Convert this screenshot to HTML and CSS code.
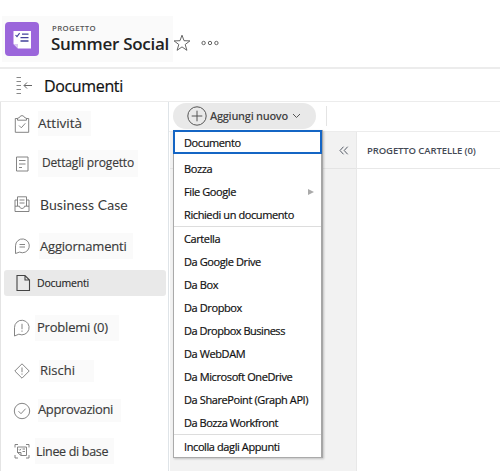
FILE: index.html
```html
<!DOCTYPE html>
<html lang="it">
<head>
<meta charset="utf-8">
<title>Summer Social - Documenti</title>
<link rel="stylesheet" href="styles.css">
</head>
<body>
<header class="project">
  <div class="project-card">
    <div class="project-icon">
      <svg width="34" height="34" viewBox="0 0 34 34"><path d="M8.500 9h17.500v17.500H13l-4.500-4.500z" fill="#fff"/><path d="M8.500 22h4.500v4.500z" fill="#d9c6f0"/><path d="M10.500 13l1.500 1.700 2.600-3.500" fill="none" stroke="#43419b" stroke-width="1.100"/><path d="M17 12.200h6.500M15.500 15.700h8M15.500 19h8" stroke="#43419b" stroke-width="1.300"/></svg>
    </div>
    <div class="project-text">
      <div class="project-kind">PROGETTO</div>
      <h1 class="project-name">Summer Social</h1>
    </div>
  </div>
  <svg class="star" width="18" height="18" viewBox="0 0 18 18"><path d="M9 1.200l2 5.500 5.900.2-4.700 3.600 1.700 5.800L9 12.900l-4.900 3.400 1.700-5.800L1.100 6.900 7 6.700z" fill="none" stroke="#555" stroke-width=".9"/></svg>
  <svg class="more" width="18" height="6" viewBox="0 0 18 6"><g fill="none" stroke="#666" stroke-width="1"><circle cx="2.600" cy="3" r="1.700"/><circle cx="9" cy="3" r="1.700"/><circle cx="15.400" cy="3" r="1.700"/></g></svg>
</header>
<div class="title-bar">
  <svg width="18" height="18" viewBox="0 0 18 18"><path d="M.5 1.500h4.500M.5 5.500h4.500M.5 9.500h4.500M.5 13.500h4.500M.5 17.500h4.500" stroke="#888" stroke-width="1"/><path d="M16 9.500H8.200M11 6.500L8 9.500l3 3" fill="none" stroke="#666" stroke-width="1"/></svg>
  <h2 class="page-title">Documenti</h2>
</div>
<div class="body">
  <nav class="sidebar">
    <a class="nav n1"><svg width="18" height="20" viewBox="0 0 18 20"><path d="M4.500 4.500H2.300v13.800h13.400V4.500h-2.200M4.500 6.200V4.300l2-.8a2.600 2.600 0 0 1 5 0l2 .8v1.900z"/><path d="M6 11.500l2.300 2.300 4-4.500"/></svg><span>Attività</span></a>
    <a class="nav n2"><svg width="18" height="20" viewBox="0 0 18 20"><path d="M3.500 3h11.500v14H3.500zM6 6.500h6.500M6 10h6.500M6 13.500h3"/></svg><span>Dettagli progetto</span></a>
    <a class="nav n3"><svg width="18" height="20" viewBox="0 0 18 20"><path d="M4.500 6H2v11.500h14V6h-2.500M4.500 12V2.800h9V12M2 12.200h4.500c0 3 5 3 5 0H16M6.500 6h5M6.500 9h5"/></svg><span>Business Case</span></a>
    <a class="nav n4"><svg width="18" height="20" viewBox="0 0 18 20"><path d="M2.500 17.500V9.800a6.900 6.900 0 1 1 4 6.300zM6.500 8.500h5.500M6.500 11h5.500"/></svg><span>Aggiornamenti</span></a>
    <a class="nav n5 selected"><svg width="18" height="20" viewBox="0 0 18 20"><path d="M4 2.500h8l4.500 4.500v10.500H4zM12 2.500V7h4.500"/></svg><span>Documenti</span></a>
    <a class="nav n6"><svg width="18" height="20" viewBox="0 0 18 20"><path d="M1.500 18V9.700a7.300 7.300 0 1 1 4.300 6.500zM9 5.800v5.400M9 12.500v1.300"/></svg><span>Problemi (0)</span></a>
    <a class="nav n7"><svg width="18" height="20" viewBox="0 0 18 20"><path d="M9 2.800l7.200 7.200L9 17.200 1.800 10zM9 6.500v4.700M9 12.500v1.200"/></svg><span>Rischi</span></a>
    <a class="nav n8"><svg width="18" height="20" viewBox="0 0 18 20"><circle cx="9" cy="10" r="7.700"/><path d="M5.500 10.200l2.500 2.500 4.600-5"/></svg><span>Approvazioni</span></a>
    <a class="nav n9"><svg width="18" height="20" viewBox="0 0 18 20"><path d="M2 6.500V3.500h3M13 3.500h3v3M16 14v3h-3M5 17H2v-3M4.500 6h9v8.500H8L4.500 11.500zM4.500 11.500H8v3M6 8.500l.8.800 1.200-1.500M9.500 8h2.500M9.500 10.500h2.500"/></svg><span>Linee di base</span></a>
  </nav>
  <main class="main">
    <div class="toolbar">
      <button class="add">
        <svg width="20" height="20" viewBox="0 0 20 20"><circle cx="10" cy="10" r="9.200"/><path d="M10 4.700v10.600M4.700 10h10.600"/></svg>
        <span>Aggiungi nuovo</span>
        <svg width="9" height="6" viewBox="0 0 9 6"><path d="M1 1l3.500 3.500L8 1"/></svg>
      </button>
      <i class="divider"></i>
    </div>
    <div class="content">
      <section class="folders"><div class="folders-head"><svg width="10" height="9" viewBox="0 0 10 9"><path d="M4.500.7L1 4.500l3.500 3.800M8.700.7L5.200 4.500l3.500 3.800" fill="none" stroke="#555b66" stroke-width="1"/></svg></div></section>
      <section class="files"><h3 class="files-head">PROGETTO CARTELLE (0)</h3></section>
    </div>
    <ul class="menu">
      <li class="active">Documento</li>
      <li>Bozza</li>
      <li class="sub">File Google<i class="arrow"></i></li>
      <li>Richiedi un documento</li>
      <li class="group">Cartella</li>
      <li>Da Google Drive</li>
      <li>Da Box</li>
      <li>Da Dropbox</li>
      <li class="tight">Da Dropbox Business</li>
      <li>Da WebDAM</li>
      <li>Da Microsoft OneDrive</li>
      <li>Da SharePoint (Graph API)</li>
      <li class="tight">Da Bozza Workfront</li>
      <li class="group">Incolla dagli Appunti</li>
    </ul>
  </main>
</div>
</body>
</html>
```
FILE: styles.css
```css
* { box-sizing: border-box; }
body { margin: 0; width: 500px; height: 471px; overflow: hidden; background: #fff; color: #222; font-family: "Open Sans", "Noto Sans", sans-serif; }
h1, h2, h3, ul { margin: 0; padding: 0; font-weight: 400; list-style: none; }
svg { display: block; flex: none; }

.project { display: flex; align-items: center; height: 69px; padding: 10px 0 0 2px; border-bottom: 2px solid #ececec; }
.project-card { display: flex; width: 171px; height: 46px; padding: 6px 0 0 3px; background: #fafafa; }
.project-icon { width: 34px; height: 34px; border-radius: 4px; background: #9b66db; }
.project-text { margin-left: 13px; white-space: nowrap; }
.project-kind { height: 12px; font-size: 7.800px; line-height: 12px; font-weight: 600; letter-spacing: .4px; color: #555; }
.project-name { margin-left: -1px; font-size: 17px; line-height: 19px; font-weight: 600; letter-spacing: -.28px; }
.star { margin: 9px 0 0 0; }
.more { margin: 8px 0 0 10px; }

.title-bar { display: flex; align-items: center; gap: 10px; height: 33px; padding-left: 16px; border-bottom: 1px solid #ececec; }
.page-title { font-size: 16px; line-height: 20px; letter-spacing: -.35px; color: #111; padding-top: 1px; -webkit-text-stroke: .2px #111; }

.body { display: flex; height: 369px; }
.sidebar { display: flex; flex-direction: column; width: 169px; padding-top: 9px; border-left: 1px solid #e4e4e4; border-right: 1px solid #dfe4e8; }
.nav { display: flex; align-items: center; flex: none; padding-left: 12px; font-size: 13px; letter-spacing: -.2px; color: #3a3a3a; white-space: nowrap; }
.nav svg { fill: none; stroke: #777; stroke-width: .9; }
.nav span { display: flex; align-items: center; background: #fafafa; padding-left: 1px; -webkit-text-stroke: .15px #3a3a3a; }
.n1 span { width: 53px; height: 25px; margin-left: 7px; font-size: 13.500px; letter-spacing: 0; padding: 0 0 2px; }
.n2 { margin-top: 14px; }
.n2 span { width: 100px; height: 27px; margin-left: 7px; padding: 0 0 2px 4px; font-size: 12px; letter-spacing: -.17px; }
.n3 { margin-top: 17px; }
.n3 span { height: 20px; margin-left: 8px; background: none; font-family: Lato, sans-serif; font-size: 14px; letter-spacing: .08px; -webkit-text-stroke: 0; }
.n4 { margin-top: 19px; }
.n4 span { width: 94px; height: 26px; margin-left: 8px; padding-bottom: 0; }
.nav.selected { height: 26px; margin: 11px 2px 0 3px; padding-left: 9px; border-radius: 3px; background: #e9e9e9; color: #222; }
.n5 span { margin-left: 6px; padding: 0 0 1px; background: none; font-size: 10.500px; letter-spacing: -.22px; }
.selected svg { stroke: #444; stroke-width: 1.100; }
.n6 { margin-top: 19px; }
.n6 span { width: 84px; height: 26px; margin-left: 4px; padding: 0 0 2px 2px; }
.n7 { margin-top: 19px; }
.n7 span { width: 55px; height: 22px; margin-left: 8px; padding-bottom: 2px; letter-spacing: 0; }
.n8 { margin-top: 17px; }
.n8 span { width: 83px; height: 23px; margin-left: 7px; padding: 0 0 4px; letter-spacing: -.37px; }
.n9 { margin-top: 16px; }
.n9 span { width: 79px; height: 26px; margin-left: 4px; padding-left: 1px; font-size: 12.500px; letter-spacing: -.32px; }

.main { position: relative; display: flex; flex-direction: column; width: 331px; }
.toolbar { display: flex; align-items: center; height: 30px; padding: 0 0 2px 4px; border-bottom: 1px solid #ececec; }
.add { display: flex; align-items: center; width: 143px; height: 26px; padding: 0 0 0 14px; border: 0; border-radius: 13px; background: #e9e9e9; color: #444; font: 600 11px/14px "Open Sans", sans-serif; letter-spacing: -.28px; white-space: nowrap; }
.add svg { fill: none; stroke: #555; stroke-width: 1; }
.add span { margin: 0 4px 0 3px; }
.divider { width: 1px; height: 20px; margin-left: 10px; background: #e4e4e4; }
.content { display: flex; flex: 1; padding-left: 1px; }
.folders { width: 187px; border-right: 1px solid #e8e8e8; background: #f2f2f2; }
.folders-head { display: flex; align-items: center; justify-content: flex-end; height: 37px; padding-right: 7px; border-bottom: 1px solid #e4e4e4; }
.files { flex: 1; }
.files-head { height: 37px; padding-left: 10px; border-bottom: 1px solid #e8e8e8; font-size: 9.500px; line-height: 38px; font-weight: 600; letter-spacing: -.1px; color: #444a55; white-space: nowrap; }

.menu { position: absolute; left: 4px; top: 28px; width: 150px; height: 328px; border: 1px solid #aaa; border-right: 2px solid #a6a6a6; background: #fff; box-shadow: 1px 1px 2px #0003; }
.menu li { display: flex; align-items: center; height: 23px; padding-left: 10px; font-size: 11px; line-height: 14px; letter-spacing: -.4px; color: #111; white-space: nowrap; -webkit-text-stroke: .2px #111; }
.menu .tight { letter-spacing: -.48px; }
.menu .active { height: 24px; margin: -1px -1px 3px; padding: 2px 0 0 9px; border: 2px solid #1465c4; }
.menu .group { height: 24px; border-top: 1px solid #ddd; }
.menu .sub { justify-content: space-between; padding-right: 7px; }
.arrow { border: solid transparent; border-width: 3px 0 3px 6px; border-left-color: #aaa; }
```
